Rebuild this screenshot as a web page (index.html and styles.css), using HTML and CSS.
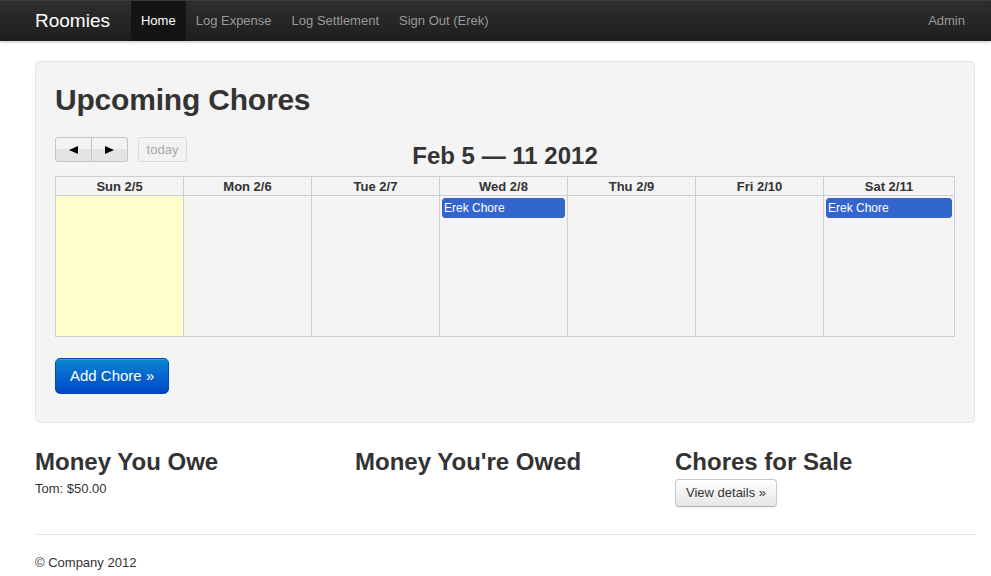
FILE: index.html
```html
<!DOCTYPE html>
<html>
<head>
<meta charset="utf-8">
<title>Roomies</title>
<link rel="stylesheet" href="styles.css">
</head>
<body>
<div class="navbar">
  <div class="container nav-inner">
    <a class="brand" href="#">Roomies</a>
    <ul class="nav">
      <li class="active"><a href="#">Home</a></li>
      <li><a href="#">Log Expense</a></li>
      <li><a href="#">Log Settlement</a></li>
      <li><a href="#">Sign Out (Erek)</a></li>
    </ul>
    <ul class="nav nav-right">
      <li><a href="#">Admin</a></li>
    </ul>
  </div>
</div>

<div class="container">
  <div class="hero">
    <h1 class="hero-title">Upcoming Chores</h1>
    <div class="fc-header">
      <div class="fc-left">
        <span class="btn-group">
          <span class="fc-btn fc-prev"><svg width="9" height="8" viewBox="0 0 9 8"><path d="M0 4L9 0V8Z" fill="#000"/></svg></span><span class="fc-btn fc-next"><svg width="9" height="8" viewBox="0 0 9 8"><path d="M9 4L0 0V8Z" fill="#000"/></svg></span>
        </span>
        <span class="fc-btn fc-today">today</span>
      </div>
      <h2 class="fc-title">Feb 5 — 11 2012</h2>
      <div class="fc-right"></div>
    </div>
    <table class="fc-table">
      <colgroup>
        <col class="c"><col class="c"><col class="c"><col class="c"><col class="c"><col class="c"><col>
      </colgroup>
      <thead>
        <tr>
          <th>Sun 2/5</th><th>Mon 2/6</th><th>Tue 2/7</th><th>Wed 2/8</th><th>Thu 2/9</th><th>Fri 2/10</th><th>Sat 2/11</th>
        </tr>
      </thead>
      <tbody>
        <tr>
          <td class="today"></td>
          <td></td>
          <td></td>
          <td><div class="fc-event">Erek Chore</div></td>
          <td></td>
          <td></td>
          <td><div class="fc-event">Erek Chore</div></td>
        </tr>
      </tbody>
    </table>
    <p class="hero-actions"><a class="btn-primary" href="#">Add Chore »</a></p>
  </div>

  <div class="row">
    <div class="span">
      <h2>Money You Owe</h2>
      <p class="owe">Tom: $50.00</p>
    </div>
    <div class="span">
      <h2>Money You're Owed</h2>
    </div>
    <div class="span">
      <h2>Chores for Sale</h2>
      <p><a class="btn" href="#">View details »</a></p>
    </div>
  </div>

  <hr class="divider">
  <footer class="footer">
    <p>© Company 2012</p>
  </footer>
</div>
</body>
</html>
```

FILE: styles.css
```css
* { box-sizing: border-box; }

body {
  margin: 0;
  font-family: "Liberation Sans", Arial, sans-serif;
  font-size: 13px;
  line-height: 18px;
  color: #333;
  background: #fff;
}

a { text-decoration: none; }

.container {
  width: 940px;
  margin-left: 35px;
}

/* Navbar */
.navbar {
  height: 41px;
  background: linear-gradient(#2e2e2e, #1e1e1e);
  box-shadow: 0 1px 3px rgba(0,0,0,0.25);
  border-top: 1px solid #3a3a3a;
}

.nav-inner {
  display: flex;
  height: 40px;
}

.brand {
  font-size: 19px;
  line-height: 40px;
  color: #fff;
  padding-right: 21px;
  font-weight: normal;
}

.nav {
  display: flex;
  list-style: none;
  margin: 0;
  padding: 0;
}

.nav li a {
  display: block;
  padding: 0 10px;
  line-height: 39px;
  color: #999;
  font-size: 13px;
}

.nav li.active a {
  background: #141414;
  color: #fff;
  height: 40px;
}

.nav-right {
  margin-left: auto;
}

/* Hero */
.hero {
  margin-top: 20px;
  background: #f4f4f4;
  border: 1px solid #e3e3e3;
  border-radius: 5px;
  padding: 19px 19px 19px 19px;
}

.hero-title {
  margin: 1px 0 19px;
  font-size: 30px;
  line-height: 36px;
  font-weight: bold;
  color: #333;
  letter-spacing: -0.2px;
}

.fc-header {
  display: flex;
  align-items: flex-start;
  margin-bottom: 2px;
}

.fc-left, .fc-right {
  flex: 1;
  display: flex;
  align-items: flex-start;
  gap: 10px;
}

.btn-group {
  display: flex;
}

.fc-btn {
  display: flex;
  align-items: center;
  justify-content: center;
  height: 25px;
  border: 1px solid #c4c4c4;
  background: linear-gradient(#f3f3f3 0%, #f3f3f3 50%, #e4e4e4 50%, #e4e4e4 100%);
  color: #333;
}

.fc-prev {
  width: 37px;
  border-radius: 3px 0 0 3px;
}

.fc-next {
  width: 36px;
  border-left: none;
  border-radius: 0 3px 3px 0;
}

.fc-today {
  width: 49px;
  border-radius: 3px;
  border-color: #dcdcdc;
  background: #f2f2f2;
  color: #a8a8a8;
  font-size: 13px;
}

.fc-title {
  margin: 1px 0 0;
  font-size: 24px;
  line-height: 36px;
  font-weight: bold;
  color: #333;
  white-space: nowrap;
}

.fc-table {
  width: 900px;
  border-collapse: collapse;
  table-layout: fixed;
  margin-bottom: 21px;
}

.fc-table col.c { width: 128px; }

.fc-table th {
  border: 1px solid #cfcfcf;
  height: 19px;
  padding: 0;
  font-size: 13px;
  font-weight: bold;
  line-height: 17px;
  color: #333;
  text-align: center;
}

.fc-table td {
  border: 1px solid #cfcfcf;
  height: 141px;
  padding: 2px 2px 0;
  vertical-align: top;
}

.fc-table td.today {
  background: #ffffcc;
}

.fc-event {
  background: #3366cc;
  border: 1px solid #3366cc;
  border-radius: 3px;
  color: #fff;
  font-size: 12px;
  line-height: 18px;
  padding-left: 1px;
}

.hero-actions {
  margin: 0 0 9px;
}

.btn-primary {
  display: inline-block;
  padding: 9px 14px;
  font-size: 15px;
  line-height: 16px;
  color: #fff;
  background: linear-gradient(#0a86d0, #0046c9);
  border: 1px solid #0047b0;
  border-radius: 5px;
  box-shadow: inset 0 1px 0 rgba(255,255,255,0.2);
}

/* Row */
.row {
  display: grid;
  grid-template-columns: 300px 300px 300px;
  column-gap: 20px;
  margin-top: 22px;
}

.span h2 {
  margin: 0;
  font-size: 24px;
  line-height: 34px;
  font-weight: bold;
  color: #333;
}

.span p {
  margin: 0 0 9px;
}

.span p.owe {
  margin-top: 1px;
}

.btn {
  display: inline-block;
  padding: 4px 10px;
  font-size: 13px;
  line-height: 18px;
  color: #333;
  background: linear-gradient(#ffffff, #e6e6e6);
  border: 1px solid #c8c8c8;
  border-bottom-color: #b3b3b3;
  border-radius: 4px;
  box-shadow: 0 1px 2px rgba(0,0,0,0.05);
}

.divider {
  margin: 18px 0 18px;
  border: 0;
  border-top: 1px solid #e5e5e5;
  border-bottom: 1px solid #fff;
}

.footer p {
  margin: 0;
}
```
